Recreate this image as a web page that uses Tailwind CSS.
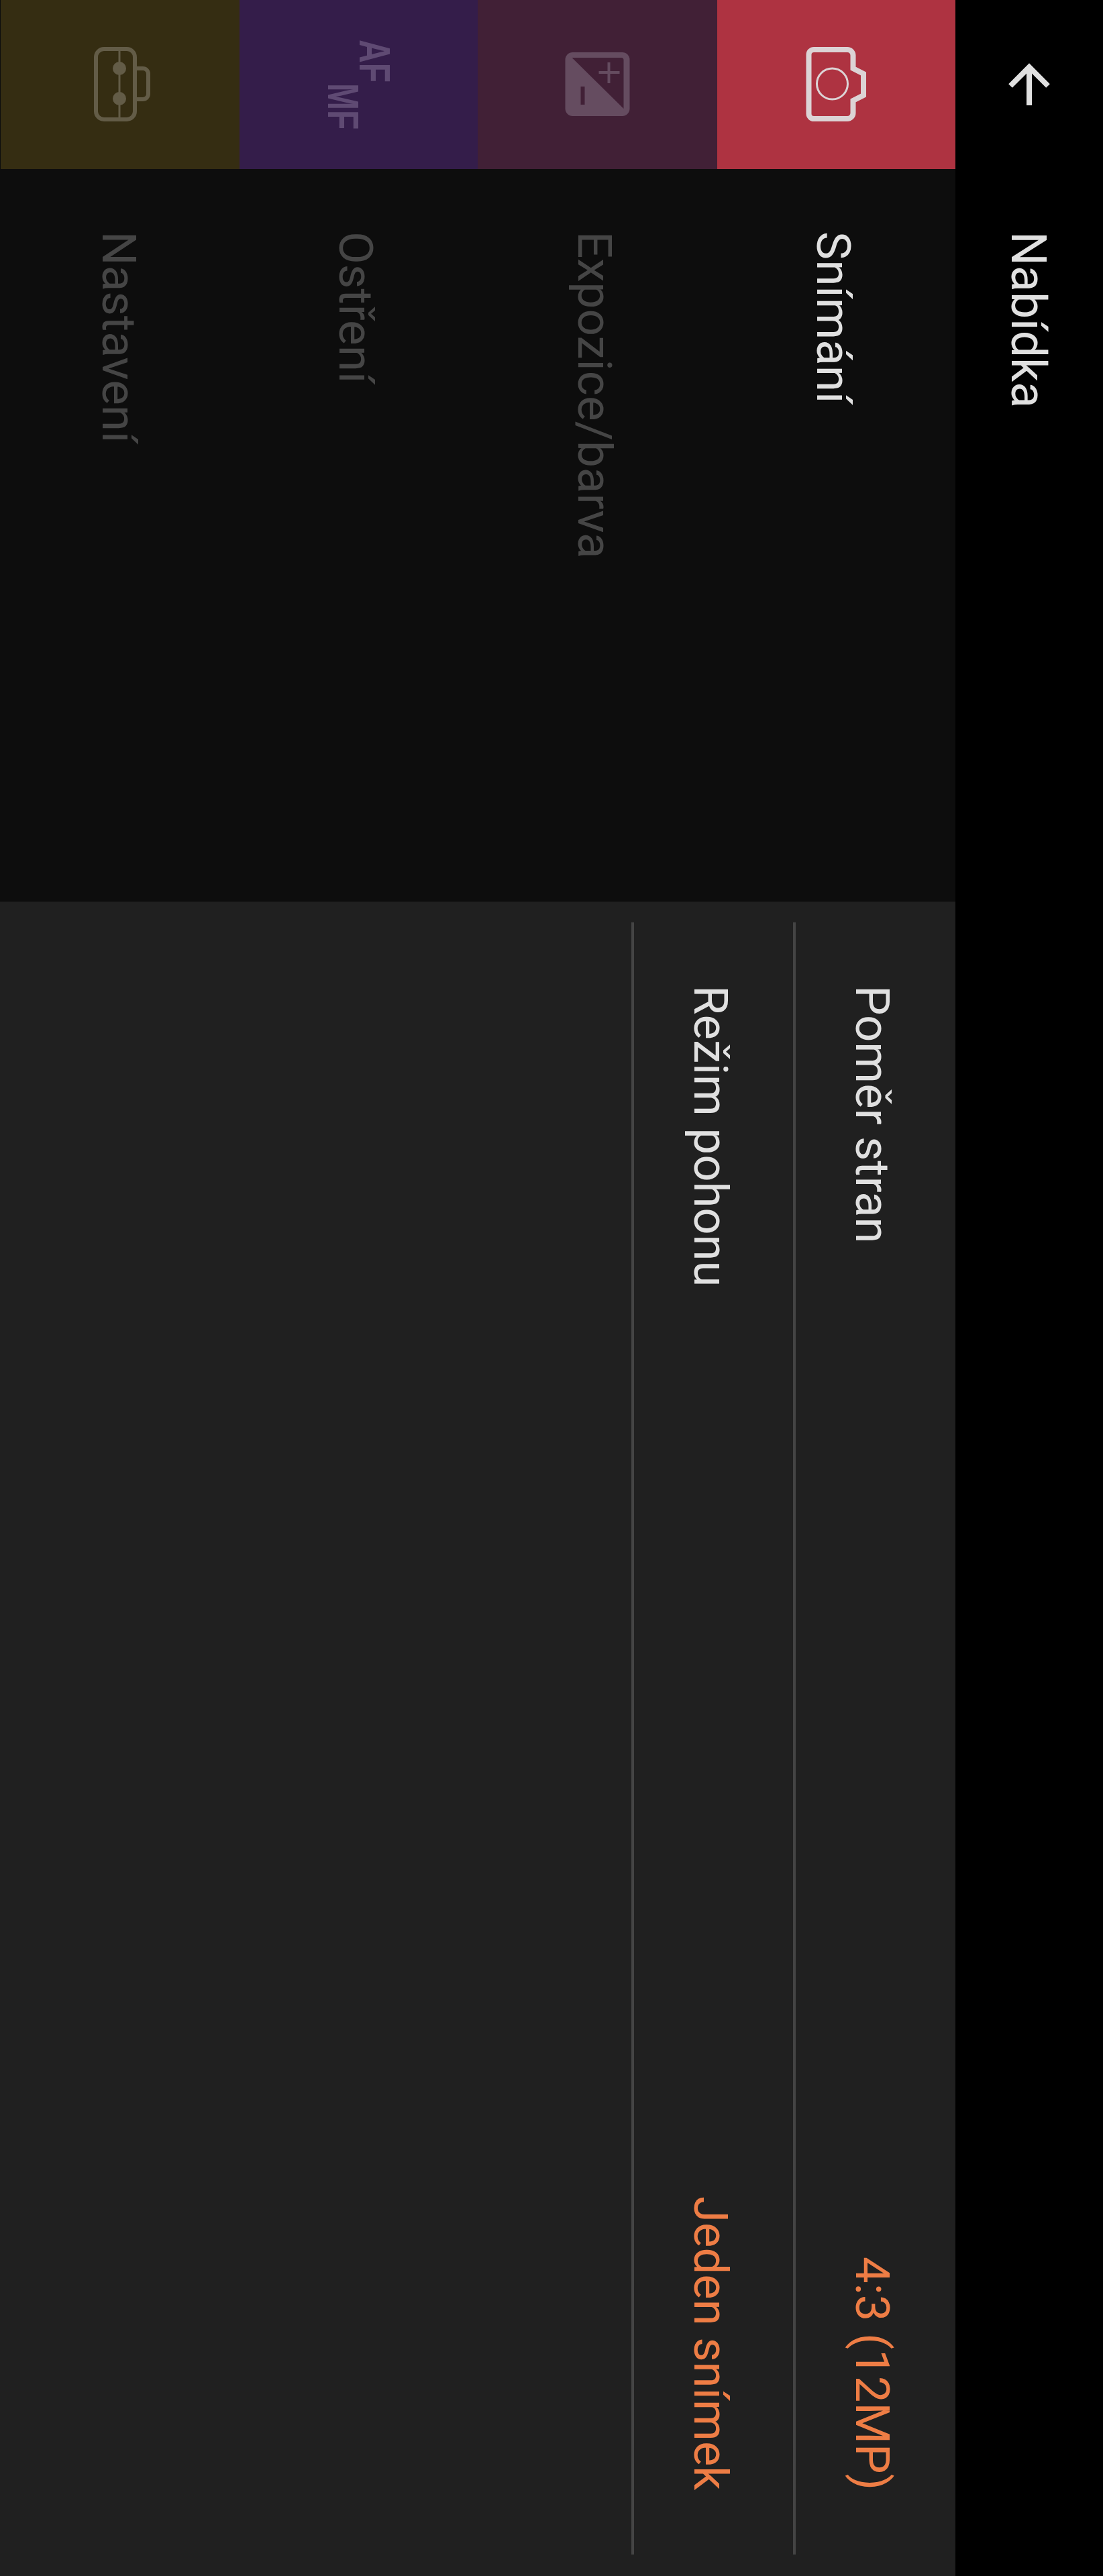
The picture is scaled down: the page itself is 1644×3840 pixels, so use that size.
<!DOCTYPE html>
<html lang="cs">
<head>
    <meta charset="UTF-8">
    <title>Nabídka</title>
    <script src="https://cdn.jsdelivr.net/npm/@tailwindcss/browser@4"></script>
</head>
<body class="bg-black font-[Roboto,sans-serif] overflow-hidden">
    <div class="w-[1644px] h-[3840px] flex flex-row-reverse">

        <!-- title column -->
        <div class="w-[220px] flex-none flex flex-col items-center bg-black">
            <div class="h-[252px] flex-none flex items-center justify-center">
                <svg width="80" height="80" viewBox="0 0 80 80" fill="none" stroke="#e0e0e0" stroke-width="8">
                    <path d="M12 42 L40 14 L68 42"/>
                    <path d="M40 14 V71"/>
                </svg>
            </div>
            <div class="pt-[93px] pr-[4px] [writing-mode:vertical-rl] text-[71.5px] leading-none text-[#e0e0e0]">Nabídka</div>
        </div>

        <div class="w-[1424px] flex-none flex flex-col">

            <!-- tabs -->
            <div class="h-[252px] flex-none flex pl-px bg-[#0d0d0d]">
                <div class="w-[356px] bg-[#352d12] flex items-center justify-center">
                    <svg width="120" height="120" viewBox="0 0 120 120" fill="none" stroke="#635c47">
                        <rect x="24" y="7" width="58" height="105" rx="12" stroke-width="6"/>
                        <path d="M85 36 H94 a8 8 0 0 1 8 8 V74 a8 8 0 0 1 -8 8 H85" stroke-width="6"/>
                        <path d="M59 7 V112" stroke-width="3"/>
                        <circle cx="59" cy="36" r="10" fill="#635c47" stroke="none"/>
                        <circle cx="59" cy="81" r="10" fill="#635c47" stroke="none"/>
                    </svg>
                </div>
                <div class="w-[355px] bg-[#341d4a] flex items-center justify-center">
                    <div class="w-[70px] h-[134px] scale-x-[1.34] flex flex-col [writing-mode:vertical-rl] font-['Liberation_Sans',sans-serif] font-bold text-[48px] leading-[35px] text-[#5f4a73]">
                        <span class="self-start">AF</span>
                        <span class="self-end">MF</span>
                    </div>
                </div>
                <div class="w-[357px] bg-[#412036] flex items-center justify-center">
                    <svg width="120" height="120" viewBox="0 0 120 120">
                        <rect x="11.5" y="12" width="96" height="95" rx="11" fill="#654c60"/>
                        <path d="M21.5 20 H95 a3.5 3.5 0 0 1 3.5 3.5 V96 Z" fill="#412036"/>
                        <rect x="34.5" y="63" width="6" height="27" fill="#412036"/>
                        <path d="M61.500 42 H92.500 M76.500 27 V58" stroke="#654c60" stroke-width="4"/>
                    </svg>
                </div>
                <div class="w-[355px] bg-[#ae3341] flex items-center justify-center">
                    <svg width="120" height="120" viewBox="0 0 120 120" fill="none" stroke="#dcd3d5">
                        <path d="M26 8 H76 a8.500 8.500 0 0 1 8.500 8.500 V36 L100 44 V76 L84.500 84 V102.500 a8.500 8.500 0 0 1 -8.500 8.500 H26 a7.500 7.500 0 0 1 -7.500 -7.500 V15.500 a7.500 7.500 0 0 1 7.500 -7.500 Z" stroke-width="8"/>
                        <circle cx="53.500" cy="59" r="23" stroke-width="3"/>
                    </svg>
                </div>
            </div>

            <!-- tab labels -->
            <div class="h-[1092px] flex-none flex pl-px bg-[#0d0d0d] text-[71px] leading-none">
                <div class="w-[356px] flex justify-center pt-[93px] pr-[4px] text-[#454545]"><span class="[writing-mode:vertical-rl]">Nastavení</span></div>
                <div class="w-[355px] flex justify-center pt-[93px] pr-[8px] text-[#454545]"><span class="[writing-mode:vertical-rl]">Ostření</span></div>
                <div class="w-[357px] flex justify-center pt-[93px] pr-[8px] text-[#454545]"><span class="[writing-mode:vertical-rl]">Expozice/barva</span></div>
                <div class="w-[355px] flex justify-center pt-[93px] pr-[8px] text-[#e0e0e0]"><span class="[writing-mode:vertical-rl]">Snímání</span></div>
            </div>

            <!-- settings rows -->
            <div class="flex-1 flex flex-row-reverse bg-[#202020] pt-[31px] pb-[32px] text-[70.6px] leading-none">
                <div class="w-[242px] flex-none border-l-4 border-[#444444] flex flex-col items-center justify-between pt-[94px] pb-[96px] pr-[10px]">
                    <span class="[writing-mode:vertical-rl] text-[#e0e0e0]">Poměr stran</span>
                    <span class="[writing-mode:vertical-rl] text-[#ee7d45]">4:3 (12MP)</span>
                </div>
                <div class="w-[241px] flex-none border-l-4 border-[#444444] flex flex-col items-center justify-between pt-[94px] pb-[96px] pr-[10px]">
                    <span class="[writing-mode:vertical-rl] text-[#e0e0e0]">Režim pohonu</span>
                    <span class="[writing-mode:vertical-rl] text-[#ee7d45]">Jeden snímek</span>
                </div>
            </div>
        </div>
    </div>
</body>
</html>
